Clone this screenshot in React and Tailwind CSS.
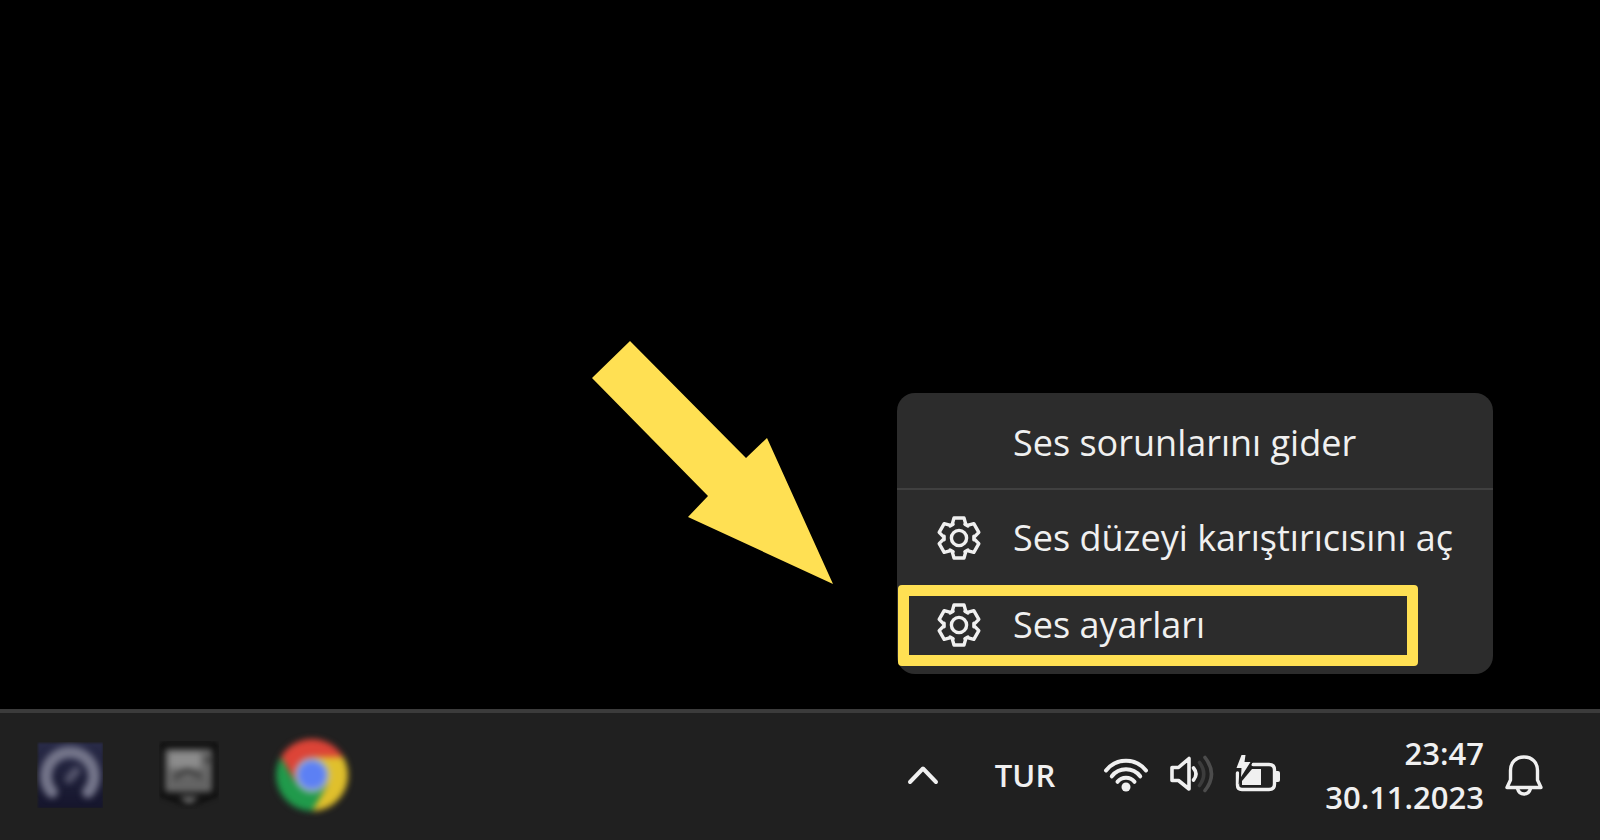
import React from "react";

// Six-toothed outline, one tooth every 60 degrees around the origin.
const TOOTH = [
  [-9, -12],
  [-6.8, -13.6],
  [-5, -20],
  [5, -20],
  [6.8, -13.6],
  [9, -12],
];
const gearPoints = [0, 1, 2, 3, 4, 5]
  .flatMap((n) => {
    const a = (n * Math.PI) / 3;
    return TOOTH.map(
      ([x, y]) =>
        `${(x * Math.cos(a) - y * Math.sin(a)).toFixed(2)},${(x * Math.sin(a) + y * Math.cos(a)).toFixed(2)}`
    );
  })
  .join(" ");

function GearIcon() {
  return (
    <svg viewBox="-22 -22 44 44" className="size-11 shrink-0" fill="none" stroke="currentColor" strokeWidth="3.4" strokeLinejoin="round" aria-hidden="true">
      <polygon points={gearPoints} />
      <circle r="7.6" />
    </svg>
  );
}

function MenuItem({ icon, highlighted, children }) {
  return (
    <button type="button" role="menuitem" className="relative flex h-[87px] w-full items-center gap-8 pr-10 pl-10 text-left whitespace-nowrap">
      {icon ? <GearIcon /> : <span className="size-11 shrink-0" />}
      <span>{children}</span>
      {highlighted && (
        <span className="absolute top-1 right-[75px] left-px h-[81px] rounded-sm border-[11px] border-[#ffe053]" />
      )}
    </button>
  );
}

function SpeedtestIcon() {
  return (
    <svg viewBox="0 0 66 66" className="size-[66px]" aria-hidden="true">
      <defs>
        <linearGradient id="navy" x1="0" y1="0" x2="0" y2="1">
          <stop offset="0" stopColor="#292b48" />
          <stop offset="1" stopColor="#15152c" />
        </linearGradient>
      </defs>
      <rect x="1" y="1" width="65" height="65" fill="url(#navy)" className="blur-[1px]" />
      <g className="blur-[3px]" fill="none" stroke="#74758a" strokeLinecap="round">
        <path d="M15 50A24 24 0 1 1 51 50" strokeWidth="12" />
        <path d="M32 37L39 29" strokeWidth="9" opacity=".6" />
      </g>
    </svg>
  );
}

function EpicIcon() {
  return (
    <svg viewBox="0 0 60 68" className="h-[68px] w-[60px]" aria-hidden="true">
      <path d="M5 1H55Q59 1 59 5V56L30 67L1 56V5Q1 1 5 1Z" fill="#111111" className="blur-[2px]" />
      <g className="blur-[3px]">
        <rect x="6" y="8" width="47" height="43" rx="3" fill="#686868" />
        <rect x="10" y="11" width="32" height="16" fill="#8c8c8c" />
        <path d="M15 37L28 29L43 36M45 19H55" stroke="#383838" strokeWidth="4" fill="none" />
        <path d="M12 42H50" stroke="#565656" strokeWidth="2" />
        <path d="M20 56H40L30 63Z" fill="#7a7a7a" />
      </g>
    </svg>
  );
}

function ChromeIcon() {
  return (
    <svg viewBox="-37 -37 74 74" className="size-[74px] blur-[3px]" aria-hidden="true">
      <path d="M-31.2 -18A36 36 0 0 1 31.2 -18L0 -18L-15.6 9Z" fill="#dc4437" />
      <path d="M31.2 -18A36 36 0 0 1 0 36L15.6 9L0 -18Z" fill="#e0c02c" />
      <path d="M0 36A36 36 0 0 1 -31.2 -18L-15.6 9L15.6 9Z" fill="#209a4b" />
      <circle r="17.5" fill="#b0b9c8" />
      <circle r="14" fill="#5c80f4" />
    </svg>
  );
}

function ChevronIcon() {
  return (
    <svg viewBox="0 0 32 20" className="h-5 w-8" fill="none" stroke="currentColor" strokeWidth="4" strokeLinecap="round" strokeLinejoin="round" aria-hidden="true">
      <path d="M3 17L16 3.5L29 17" />
    </svg>
  );
}

function WifiIcon() {
  return (
    <svg viewBox="0 0 46 38" className="h-[38px] w-[46px]" fill="none" stroke="currentColor" strokeWidth="4" strokeLinecap="round" aria-hidden="true">
      <path d="M3 14.500A25.500 25.500 0 0 1 43 14.500" />
      <path d="M8.800 20.300A18 18 0 0 1 37.200 20.300" />
      <path d="M14.500 25.800A11 11 0 0 1 31.500 25.800" />
      <circle cx="23" cy="31" r="4.500" fill="currentColor" stroke="none" />
    </svg>
  );
}

function SpeakerIcon() {
  return (
    <svg viewBox="0 0 46 42" className="h-[42px] w-[46px]" fill="none" stroke="currentColor" strokeWidth="3.6" strokeLinecap="round" strokeLinejoin="round" aria-hidden="true">
      <path d="M3 13.500H9.500L20 4.500V35L9.500 26.500H3Z" />
      <path d="M24.500 14Q29.500 20 24.500 26" />
      <path d="M30.500 8.500Q39 20 30.500 31.500" stroke="#3c3c3c" />
      <path d="M36 3.500Q49 20 36 36.500" stroke="#4c4c4c" />
    </svg>
  );
}

function BatteryIcon() {
  return (
    <svg viewBox="0 0 46 42" className="h-[42px] w-[46px]" fill="none" aria-hidden="true">
      <path d="M18 10.500H34Q39.500 10.500 39.500 16V30Q39.500 35.500 34 35.500H7Q2.500 35.500 2.500 31V19" stroke="currentColor" strokeWidth="3.4" strokeLinecap="round" />
      <path d="M41 17H43Q45 17 45 19V26Q45 28 43 28H41Z" fill="currentColor" />
      <path d="M17 15H26V31H7V27Z" fill="currentColor" />
      <path d="M6.500 1H10.500L9.500 8H15.500L6 23L6.500 14H1.500Z" fill="currentColor" stroke="#202020" strokeWidth="4" paintOrder="stroke" />
    </svg>
  );
}

function BellIcon() {
  return (
    <svg viewBox="0 0 40 42" className="h-[42px] w-10" fill="none" stroke="currentColor" strokeWidth="3.4" strokeLinejoin="round" aria-hidden="true">
      <path d="M20 3C11.500 3 6.500 9 6.500 16.500V26L3 33.500H37L33.500 26V16.500C33.500 9 28.500 3 20 3Z" />
      <path d="M13.500 34.500Q15 40 20 40Q25 40 26.500 34.500" />
    </svg>
  );
}

export default function App() {
  return (
    <div className="flex min-h-screen flex-col overflow-hidden bg-black font-['Open_Sans','Noto_Sans',sans-serif] text-[#f0f0f0]">
      <main className="relative flex-1">
        <svg viewBox="0 0 242 244" className="absolute right-[766px] bottom-[124px] h-[244px] w-[242px]" aria-hidden="true">
          <path d="M38 0L154 117L175 97L241 243L96 176L116 155L0 37Z" fill="#ffe053" />
        </svg>
        <div role="menu" className="absolute right-[107px] bottom-[35px] w-[596px] rounded-[18px] bg-[#2c2c2c] pt-1.5 pb-1.5 text-[36px] leading-[48px] [text-shadow:0_0_1px_#f0f0f0,0_0_1px_#f0f0f0]">
          <MenuItem>Ses sorunlarını gider</MenuItem>
          <div role="separator" className="mt-0.5 mb-1 h-0.5 bg-[#404040]" />
          <MenuItem icon>Ses düzeyi karıştırıcısını aç</MenuItem>
          <MenuItem icon highlighted>Ses ayarları</MenuItem>
        </div>
      </main>
      <footer className="flex h-[131px] items-center justify-between border-t-4 border-[#3b3b3b] bg-[#202020] pr-14 pb-1 pl-[37px]">
        <nav className="flex items-center gap-14" aria-label="Uygulamalar">
          <button type="button" aria-label="Speedtest"><SpeedtestIcon /></button>
          <button type="button" aria-label="Epic Games"><EpicIcon /></button>
          <button type="button" aria-label="Chrome"><ChromeIcon /></button>
        </nav>
        <div className="flex items-center text-[31px] leading-[44px] font-semibold">
          <button type="button" aria-label="Gizli simgeler" className="mr-14"><ChevronIcon /></button>
          <button type="button" className="mr-12">TUR</button>
          <button type="button" aria-label="Ağ, ses ve pil" className="mr-11 flex items-center gap-5">
            <WifiIcon />
            <SpeakerIcon />
            <BatteryIcon />
          </button>
          <button type="button" className="mr-5 flex flex-col items-end">
            <span>23:47</span>
            <span>30.11.2023</span>
          </button>
          <button type="button" aria-label="Bildirimler"><BellIcon /></button>
        </div>
      </footer>
    </div>
  );
}
